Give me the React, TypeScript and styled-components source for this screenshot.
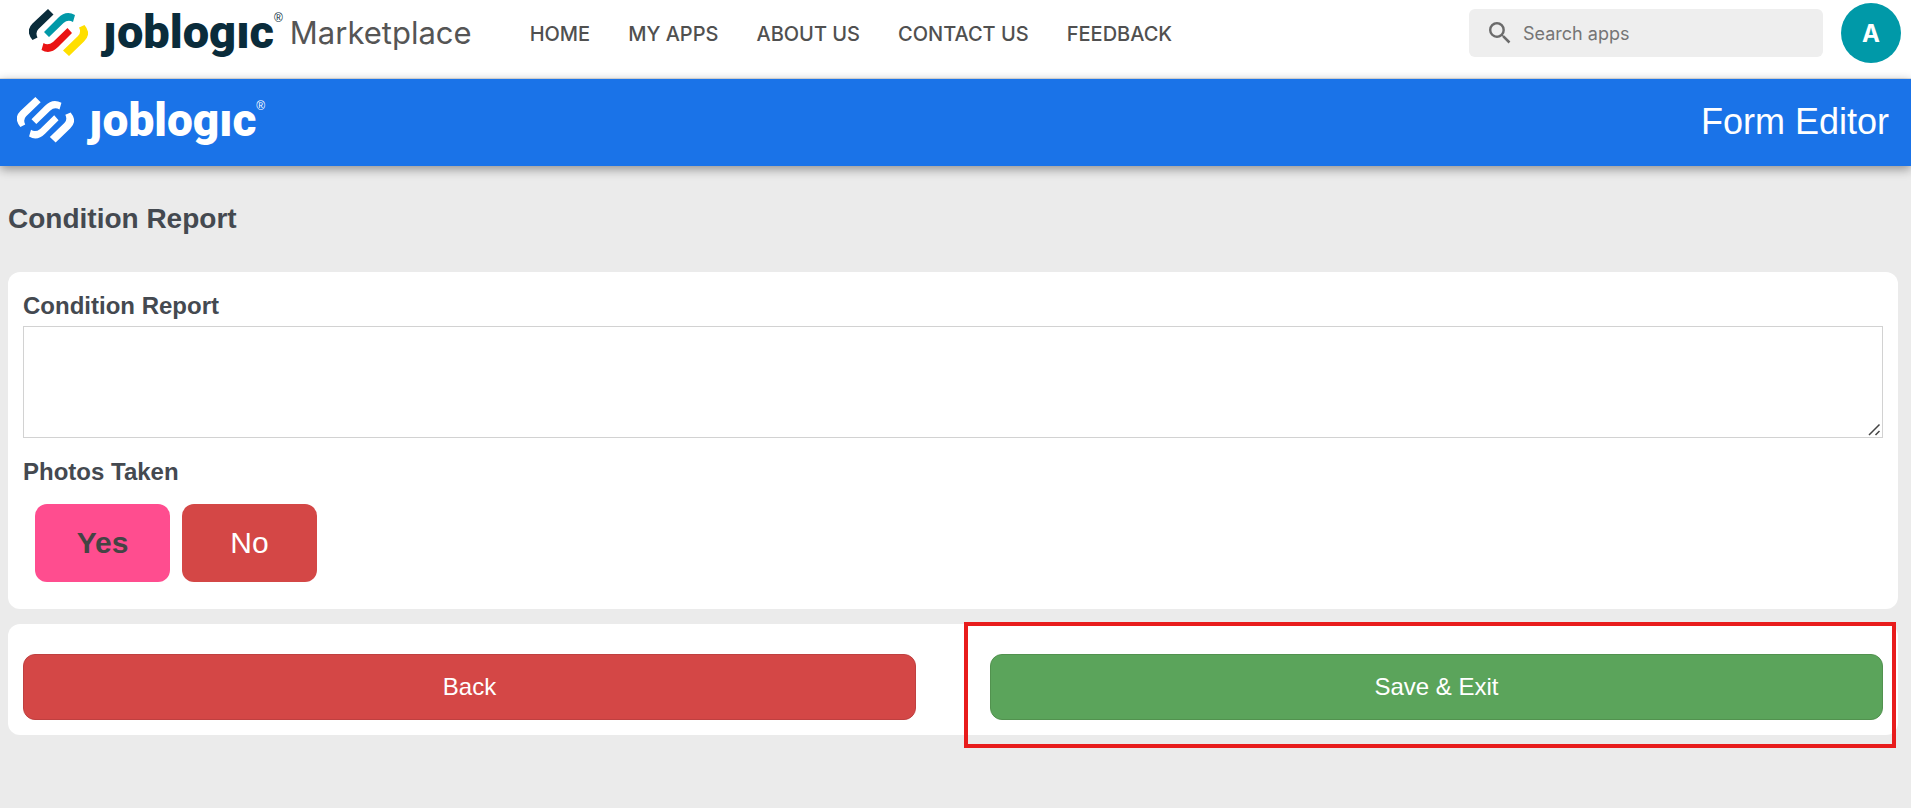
import React from "react";
import styled, { createGlobalStyle } from "styled-components";

const sans = `"Liberation Sans", Arial, sans-serif`;
const inter = `Inter, "Liberation Sans", sans-serif`;

const GlobalStyle = createGlobalStyle`
  *, *::before, *::after { box-sizing: border-box; }
  body { margin: 0; background: #ebebeb; font-family: ${sans}; color: #444950; }
`;

const TopBar = styled.header`
  display: flex;
  align-items: center;
  height: 79px;
  padding: 0 10px 12px 29px;
  background: #fff;
  border-bottom: 1px solid #e4e4e4;
  font-family: ${inter};
`;

const Brand = styled.a`
  display: flex;
  align-items: center;
  padding-bottom: 2px;
  color: inherit;
  text-decoration: none;
`;

const Mark = styled.svg<{ $width: number }>`
  flex: none;
  width: ${(p) => p.$width}px;
  height: auto;
`;

const Wordmark = styled.span<{ $size: number; $color: string }>`
  display: flex;
  margin-left: 15px;
  font: 900 ${(p) => p.$size}px/52px Roboto, Lato, sans-serif;
  color: ${(p) => p.$color};
`;

const Registered = styled.sup`
  font: 400 12px/12px ${sans};
  margin-top: 6px;
`;

const Product = styled.span`
  margin-left: 7px;
  padding-top: 2px;
  font-size: 31px;
  line-height: 40px;
  color: #555;
`;

const Nav = styled.nav`
  display: flex;
  gap: 38px;
  margin-left: 58px;
  padding-top: 1px;
`;

const NavLink = styled.a`
  font-size: 20px;
  font-weight: 500;
  line-height: 24px;
  color: #505050;
  text-decoration: none;
  white-space: nowrap;
`;

const Search = styled.label`
  display: flex;
  align-items: center;
  gap: 12px;
  width: 354px;
  height: 48px;
  margin-left: auto;
  padding: 0 20px;
  border-radius: 6px;
  background: #eee;
`;

const SearchInput = styled.input`
  flex: 1;
  min-width: 0;
  padding: 2px 0 0;
  border: 0;
  outline: 0;
  background: transparent;
  font: 400 18px/24px ${inter};
  &::placeholder { color: #757575; opacity: 1; }
`;

const Avatar = styled.button`
  flex: none;
  width: 60px;
  height: 60px;
  margin-left: 18px;
  padding: 2px 0 0;
  border: 0;
  border-radius: 50%;
  background: #0099a8;
  color: #fff;
  font: 700 24px/58px ${inter};
`;

const EditorBar = styled.div`
  display: flex;
  align-items: center;
  justify-content: space-between;
  height: 87px;
  padding: 0 22px 3px 17px;
  background: #1a73e8;
  box-shadow: 0 3px 10px rgba(0, 0, 0, 0.4);
  color: #fff;
`;

const EditorTitle = styled.span`
  padding-top: 2px;
  font-size: 36px;
  line-height: 44px;
`;

const Main = styled.main`
  padding: 37px 13px 60px 8px;
`;

const Title = styled.h1`
  margin: 0 0 37px;
  font-size: 28px;
  line-height: 32px;
`;

const Card = styled.section`
  padding: 20px 15px 27px;
  border-radius: 12px;
  background: #fff;
`;

const fieldLabel = `
  display: block;
  padding: 0;
  font-weight: 700;
  font-size: 24px;
  line-height: 28px;
`;

const FieldLabel = styled.label`
  ${fieldLabel}
  margin-bottom: 6px;
`;

const grip = encodeURIComponent(
  `<svg xmlns="http://www.w3.org/2000/svg" width="15" height="15" fill="none" stroke="#444" stroke-width="1.500"><path d="M2 13L12.500 2.500M8.500 13L12.500 9"/></svg>`
);

const TextArea = styled.textarea`
  display: block;
  width: 100%;
  height: 112px;
  padding: 8px;
  border: 1px solid #d2d2d2;
  background: #fff;
  font: 400 24px/28px ${sans};
  resize: vertical;
  outline: 0;
  &::-webkit-resizer {
    background: url("data:image/svg+xml,${grip}") no-repeat right bottom;
  }
`;

const Choices = styled.fieldset`
  margin: 20px 0 0;
  padding: 0;
  border: 0;
`;

const Legend = styled.legend`
  ${fieldLabel}
`;

const ChoiceRow = styled.div`
  display: flex;
  gap: 12px;
  padding: 18px 12px 0;
`;

const Choice = styled.button<{ $selected?: boolean }>`
  width: 135px;
  height: 78px;
  border: 0;
  border-radius: 12px;
  background: ${(p) => (p.$selected ? "#ff4d8f" : "#d44746")};
  color: ${(p) => (p.$selected ? "#444" : "#fff")};
  font: ${(p) => (p.$selected ? 700 : 400)} 30px/36px ${sans};
`;

const Actions = styled.section`
  display: grid;
  grid-template-columns: 1fr 1fr;
  gap: 74px;
  margin-top: 15px;
  padding: 30px 15px 15px;
  border-radius: 12px;
  background: #fff;
`;

const ActionSlot = styled.div`
  position: relative;
`;

const Action = styled.button<{ $tone: "danger" | "success" }>`
  display: block;
  width: 100%;
  height: 66px;
  border: 1px solid ${(p) => (p.$tone === "danger" ? "#bf4040" : "#52924f")};
  border-radius: 12px;
  background: ${(p) => (p.$tone === "danger" ? "#d44746" : "#5ba45b")};
  color: #fff;
  font: 400 24px/28px ${sans};
`;

const Highlight = styled.span`
  position: absolute;
  inset: -32px -13px -28px -26px;
  border: 4px solid #e81c1c;
  pointer-events: none;
`;

function LogoMark({ width, colors }: { width: number; colors: string[] }) {
  const [a, b, c, d] = colors;
  return (
    <Mark $width={width} viewBox="0 0 59 47" aria-hidden="true">
      <path fill={a} d="M19 0L24.500 5.500L9.500 20Q6 23.500 8.500 28.500L3.500 31Q-4 22 3.500 14.500Z" />
      <path fill={b} d="M15 23L29 9Q37 1 46 6L44 13Q39 10 34.500 14L20 28Z" />
      <path fill={c} d="M38.500 19L43 24L29 38Q21 46 12.500 41L14.500 34Q19 37 24 33Z" />
      <path fill={d} d="M34 41.500L49 27Q52.500 23.500 50 18.500L55.500 16Q63 25 55 32.500L40 47Z" />
    </Mark>
  );
}

const navItems = ["HOME", "MY APPS", "ABOUT US", "CONTACT US", "FEEDBACK"];

export default function App() {
  return (
    <>
      <GlobalStyle />
      <TopBar>
        <Brand href="#">
          <LogoMark width={59} colors={["#0a2c3b", "#0099a8", "#ea1414", "#ffdf00"]} />
          <Wordmark $size={47} $color="#0a2c3b">
            ȷoblogıc<Registered>®</Registered>
          </Wordmark>
          <Product>Marketplace</Product>
        </Brand>
        <Nav aria-label="Main">
          {navItems.map((item) => (
            <NavLink key={item} href="#">{item}</NavLink>
          ))}
        </Nav>
        <Search>
          <svg width="22" height="22" viewBox="3 3 18 18" fill="#6b6b6b" aria-hidden="true">
            <path d="M15.5 14h-.79l-.28-.27A6.47 6.47 0 0 0 16 9.500 6.500 6.500 0 1 0 9.500 16c1.610 0 3.090-.59 4.230-1.570l.27.28v.79l5 4.990L20.490 19l-4.990-5zm-6 0C7.010 14 5 11.990 5 9.500S7.010 5 9.500 5 14 7.010 14 9.500 11.990 14 9.500 14z" />
          </svg>
          <SearchInput type="search" placeholder="Search apps" aria-label="Search apps" />
        </Search>
        <Avatar type="button" aria-label="Account">A</Avatar>
      </TopBar>
      <EditorBar>
        <Brand href="#">
          <LogoMark width={57} colors={["#fff", "#fff", "#fff", "#fff"]} />
          <Wordmark $size={46} $color="#fff">
            ȷoblogıc<Registered>®</Registered>
          </Wordmark>
        </Brand>
        <EditorTitle>Form Editor</EditorTitle>
      </EditorBar>
      <Main>
        <Title>Condition Report</Title>
        <Card>
          <FieldLabel htmlFor="condition-report">Condition Report</FieldLabel>
          <TextArea id="condition-report" />
          <Choices>
            <Legend>Photos Taken</Legend>
            <ChoiceRow>
              <Choice type="button" $selected aria-pressed="true">Yes</Choice>
              <Choice type="button" aria-pressed="false">No</Choice>
            </ChoiceRow>
          </Choices>
        </Card>
        <Actions>
          <ActionSlot>
            <Action type="button" $tone="danger">Back</Action>
          </ActionSlot>
          <ActionSlot>
            <Action type="button" $tone="success">Save &amp; Exit</Action>
            <Highlight />
          </ActionSlot>
        </Actions>
      </Main>
    </>
  );
}
